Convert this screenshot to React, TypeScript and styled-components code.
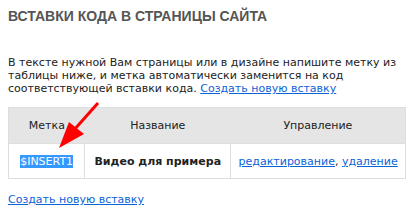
import React from 'react';
import styled, { createGlobalStyle } from 'styled-components';

const GlobalStyle = createGlobalStyle`
  body {
    margin: 0;
    background: #fff;
    font-family: "DejaVu Sans", Verdana, sans-serif;
    color: #222;
  }
`;

const Page = styled.div`
  position: relative;
  padding: 8px 9px 0 8px;
  width: 415px;
  box-sizing: border-box;
`;

const Title = styled.h1`
  margin: 0;
  font-family: "Liberation Sans", Arial, sans-serif;
  font-size: 14px;
  line-height: 16px;
  font-weight: bold;
  color: #555;
  text-transform: uppercase;
`;

const Intro = styled.p`
  margin: 32px 0 12px;
  font-size: 11px;
  line-height: 13px;
`;

const Link = styled.a`
  color: #0b63d6;
  text-decoration: underline;
`;

const Table = styled.table`
  width: 100%;
  border-collapse: collapse;
  font-size: 11px;
  border: 1px solid #dedede;
`;

const Th = styled.th<{ $w: number }>`
  width: ${(p) => p.$w}px;
  height: 35px;
  padding: 0;
  background: #e5e5e5;
  font-weight: normal;
  text-align: center;
`;

const Td = styled.td<{ $bold?: boolean }>`
  height: 34px;
  padding: 0;
  text-align: center;
  border: 1px solid #dedede;
  font-weight: ${(p) => (p.$bold ? 'bold' : 'normal')};
`;

const Selected = styled.span`
  background: #3399ff;
  color: #fff;
`;

const Footer = styled.div`
  margin-top: 14px;
  font-size: 11px;
  line-height: 13px;
`;

const Arrow = styled.svg`
  position: absolute;
  left: 0;
  top: 0;
  pointer-events: none;
`;

export default function App() {
  return (
    <>
      <GlobalStyle />
      <Page>
        <Title>Вставки кода в страницы сайта</Title>
        <Intro>
          В тексте нужной Вам страницы или в дизайне напишите метку из таблицы ниже, и метка
          автоматически заменится на код соответствующей вставки кода.{' '}
          <Link href="#">Создать новую вставку</Link>
        </Intro>
        <Table>
          <thead>
            <tr>
              <Th $w={76}>Метка</Th>
              <Th $w={147}>Название</Th>
              <Th $w={175}>Управление</Th>
            </tr>
          </thead>
          <tbody>
            <tr>
              <Td>
                <Selected>$INSERT1</Selected>
              </Td>
              <Td $bold>Видео для примера</Td>
              <Td>
                <Link href="#">редактирование</Link>, <Link href="#">удаление</Link>
              </Td>
            </tr>
          </tbody>
        </Table>
        <Footer>
          <Link href="#">Создать новую вставку</Link>
        </Footer>
        <Arrow width="415" height="221">
          <line x1="98" y1="103" x2="74" y2="130" stroke="#ff0000" strokeWidth="3" />
          <polygon points="59,148 69,122 84,134" fill="#ff0000" />
        </Arrow>
      </Page>
    </>
  );
}
